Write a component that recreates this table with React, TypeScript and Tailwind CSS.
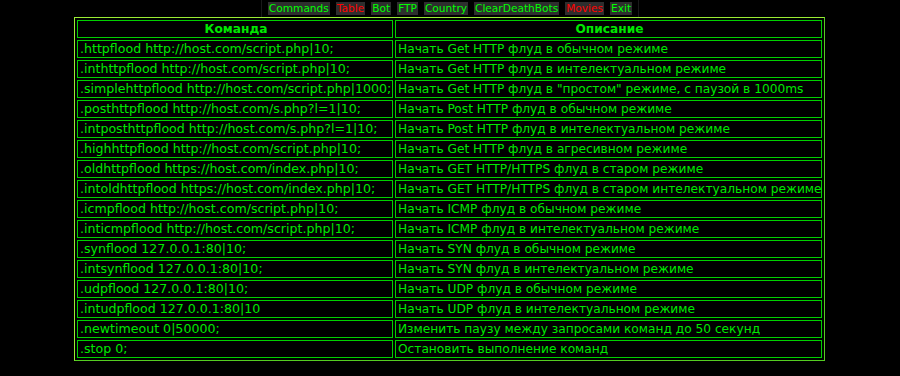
import React from 'react';

const navItems: { label: string; red?: boolean }[] = [
  { label: 'Commands' },
  { label: 'Table', red: true },
  { label: 'Bot' },
  { label: 'FTP' },
  { label: 'Country' },
  { label: 'ClearDeathBots' },
  { label: 'Movies', red: true },
  { label: 'Exit' },
];

// команда / описание
const rows: [string, string][] = [
  ['.httpflood http://host.com/script.php|10;', 'Начать Get HTTP флуд в обычном режиме'],
  ['.inthttpflood http://host.com/script.php|10;', 'Начать Get HTTP флуд в интелектуальном режиме'],
  ['.simplehttpflood http://host.com/script.php|1000;', 'Начать Get HTTP флуд в "простом" режиме, с паузой в 1000ms'],
  ['.posthttpflood http://host.com/s.php?l=1|10;', 'Начать Post HTTP флуд в обычном режиме'],
  ['.intposthttpflood http://host.com/s.php?l=1|10;', 'Начать Post HTTP флуд в интелектуальном режиме'],
  ['.highhttpflood http://host.com/script.php|10;', 'Начать Get HTTP флуд в агресивном режиме'],
  ['.oldhttpflood https://host.com/index.php|10;', 'Начать GET HTTP/HTTPS флуд в старом режиме'],
  ['.intoldhttpflood https://host.com/index.php|10;', 'Начать GET HTTP/HTTPS флуд в старом интелектуальном режиме'],
  ['.icmpflood http://host.com/script.php|10;', 'Начать ICMP флуд в обычном режиме'],
  ['.inticmpflood http://host.com/script.php|10;', 'Начать ICMP флуд в интелектуальном режиме'],
  ['.synflood 127.0.0.1:80|10;', 'Начать SYN флуд в обычном режиме'],
  ['.intsynflood 127.0.0.1:80|10;', 'Начать SYN флуд в интелектуальном режиме'],
  ['.udpflood 127.0.0.1:80|10;', 'Начать UDP флуд в обычном режиме'],
  ['.intudpflood 127.0.0.1:80|10', 'Начать UDP флуд в интелектуальном режиме'],
  ['.newtimeout 0|50000;', 'Изменить паузу между запросами команд до 50 секунд'],
  ['.stop 0;', 'Остановить выполнение команд'],
];

const cell =
  'h-[18px] border border-[#00d000] pl-[2px] text-[12.2px] leading-[16px] text-[#00e800] whitespace-nowrap overflow-hidden';

export default function App() {
  return (
    <div className="w-[900px] h-[376px] bg-black overflow-hidden font-['DejaVu_Sans',sans-serif]">
      {/* меню */}
      <div className="flex justify-center h-[17px]">
        <div className="flex items-center gap-[6px] px-[6px] h-full border-x border-[#1a1a1a]">
          {navItems.map((n) => (
            <span
              key={n.label}
              className={`h-[13px] px-[1px] bg-[#2e2e2e] text-[10.6px] leading-[13px] ${n.red ? 'text-[#ff0000]' : 'text-[#00ff00]'}`}
            >
              {n.label}
            </span>
          ))}
        </div>
      </div>

      {/* таблица команд */}
      <div className="ml-[74px] w-[751px] border border-t-[#99ee33] border-l-[#99ee33] border-r-[#55cc22] border-b-[#55cc22] p-[2px]">
        <div className="grid grid-cols-[316px_427px] gap-[2px]">
          <div className={`${cell} text-center font-bold`}>Команда</div>
          <div className={`${cell} text-center font-bold`}>Описание</div>
          {rows.map(([cmd, desc]) => (
            <React.Fragment key={cmd}>
              <div className={`${cell} text-[12.6px]`}>{cmd}</div>
              <div className={cell}>{desc}</div>
            </React.Fragment>
          ))}
        </div>
      </div>
    </div>
  );
}
